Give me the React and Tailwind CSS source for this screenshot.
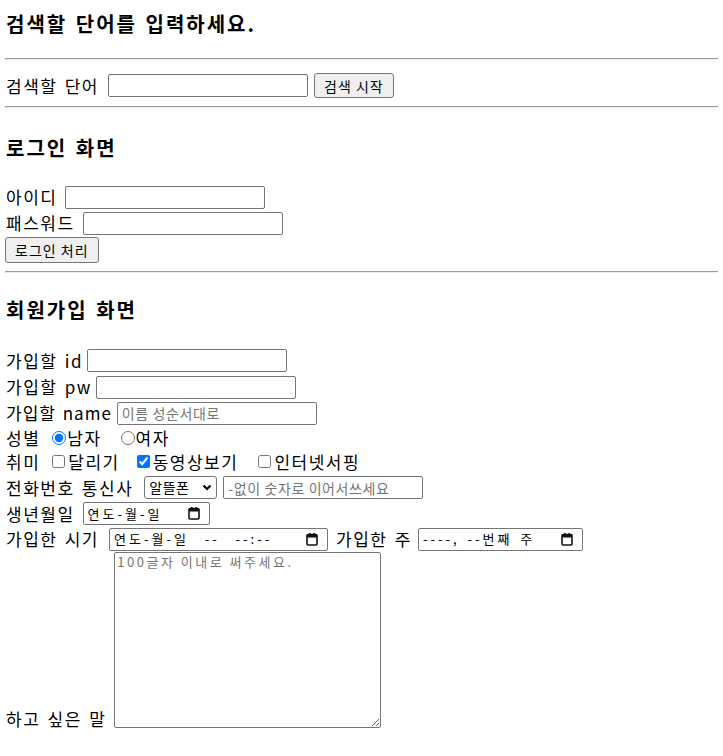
import React from 'react';

const font = { fontFamily: '"Noto Sans CJK KR", "Noto Sans", sans-serif' };

function Hr({ className = '' }) {
    return <div className={`border-t border-b border-t-[#9a9a9a] border-b-[#eeeeee] border-l border-l-[#9a9a9a] ${className}`} />;
}

function TextBox({ width = 'w-[200px]', placeholder }) {
    return (
        <input
            type="text"
            placeholder={placeholder}
            className={`${width} h-[23px] border border-[#767676] rounded-[2px] px-[4px] text-[14px] tracking-[0.6px] leading-none placeholder:text-[#757575] bg-white outline-none`}
        />
    );
}

function Btn({ children, className = '' }) {
    return (
        <button className={`h-[25px] px-[9px] border border-[#767676] rounded-[3px] bg-[#efefef] text-[14px] tracking-[1px] leading-none text-black ${className}`}>
            {children}
        </button>
    );
}

function CalIcon() {
    return (
        <svg width="12" height="13" viewBox="0 0 12 13" className="shrink-0">
            <rect x="1" y="1.5" width="10" height="10.5" rx="1" fill="none" stroke="#111" strokeWidth="1.6" />
            <rect x="1" y="1.5" width="10" height="3" fill="#111" />
            <rect x="3" y="0" width="1.6" height="2.5" fill="#111" />
            <rect x="7.4" y="0" width="1.6" height="2.5" fill="#111" />
        </svg>
    );
}

function DateBox({ width, text }) {
    return (
        <div className={`${width} h-[23px] border border-[#767676] rounded-[2px] flex items-center justify-between pl-[4px] pr-[9px] bg-white`}>
            <span className="text-[13px] text-black whitespace-pre tracking-[3px]">{text}</span>
            <CalIcon />
        </div>
    );
}

export default function App() {
    return (
        <div className="px-[5px] text-black text-[17px] tracking-[1.5px] [word-spacing:2px] bg-white min-h-[756px]" style={font}>
            <div className="h-[48px] flex items-center pl-[1px] text-[20px] tracking-[2px] font-bold">검색할 단어를 입력하세요.</div>
            <Hr className="mt-[10px]" />
            <div className="mt-[13px] h-[25px] flex items-center gap-[9px] pl-[1px]">
                <span>검색할 단어</span>
                <TextBox />
                <Btn className="-ml-[3px]">검색 시작</Btn>
            </div>
            <Hr className="mt-[8px]" />

            <div className="mt-[16px] h-[48px] flex items-center pl-[1px] text-[20px] tracking-[2px] font-bold">로그인 화면</div>
            <div className="mt-[12px] h-[26px] flex items-center gap-[8px] pl-[1px]">
                <span>아이디</span>
                <TextBox />
            </div>
            <div className="h-[26px] flex items-center gap-[8px] pl-[1px]">
                <span>패스워드</span>
                <TextBox />
            </div>
            <Btn className="h-[26px] mt-[-2px]">로그인 처리</Btn>
            <Hr className="mt-[8px]" />

            <div className="mt-[13px] h-[48px] flex items-center pl-[1px] text-[20px] tracking-[2px] font-bold">회원가입 화면</div>
            <div className="mt-[13px] h-[27px] flex items-center gap-[4px] pl-[1px]">
                <span>가입할 id</span>
                <TextBox />
            </div>
            <div className="h-[26px] flex items-center gap-[4px] pl-[1px]">
                <span>가입할 pw</span>
                <TextBox />
            </div>
            <div className="h-[26px] flex items-center gap-[5px] pl-[1px]">
                <span className="tracking-[1px]">가입할 name</span>
                <TextBox placeholder="이름 성순서대로" />
            </div>
            <div className="h-[23px] flex items-center pl-[1px]">
                <span className="mr-[12px]">성별</span>
                <label className="flex items-center gap-[1px] mr-[19px]">
                    <input type="radio" name="gender" defaultChecked className="w-[14px] h-[14px] m-0 accent-[#0075ff]" />
                    <span>남자</span>
                </label>
                <label className="flex items-center gap-[1px]">
                    <input type="radio" name="gender" className="w-[14px] h-[14px] m-0" />
                    <span>여자</span>
                </label>
            </div>
            <div className="h-[25px] flex items-center pl-[1px]">
                <span className="mr-[12px]">취미</span>
                <label className="flex items-center gap-[3px] mr-[17px]">
                    <input type="checkbox" className="w-[13px] h-[13px] m-0" />
                    <span>달리기</span>
                </label>
                <label className="flex items-center gap-[3px] mr-[20px]">
                    <input type="checkbox" defaultChecked className="w-[13px] h-[13px] m-0 accent-[#0075ff]" />
                    <span>동영상보기</span>
                </label>
                <label className="flex items-center gap-[3px]">
                    <input type="checkbox" className="w-[13px] h-[13px] m-0" />
                    <span>인터넷서핑</span>
                </label>
            </div>
            <div className="h-[27px] flex items-center gap-[6px] pl-[1px]">
                <span className="mr-[5px]">전화번호 통신사</span>
                <div className="w-[73px] h-[23px] border border-[#767676] rounded-[3px] flex items-center justify-between pl-[4px] pr-[4px] bg-white">
                    <span className="text-[14px] tracking-[0.5px]">알뜰폰</span>
                    <svg width="10" height="7" viewBox="0 0 10 7">
                        <path d="M1.5 1.5 L5 5 L8.5 1.5" fill="none" stroke="#000" strokeWidth="2" />
                    </svg>
                </div>
                <TextBox placeholder="-없이 숫자로 이어서쓰세요" />
            </div>
            <div className="h-[25px] flex items-center gap-[8px] pl-[1px]">
                <span>생년월일</span>
                <DateBox width="w-[127px]" text="연도-월-일" />
            </div>
            <div className="h-[26px] flex items-center gap-[6px] pl-[1px]">
                <span className="mr-[4px]">가입한 시기</span>
                <DateBox width="w-[219px]" text="연도-월-일  --  --:--" />
                <span className="ml-[2px]">가입한 주</span>
                <DateBox width="w-[165px]" text="----, --번째 주" />
            </div>
            <div className="flex items-end gap-[8px] pl-[1px]">
                <span className="leading-[20px] mb-[-1px]">하고 싶은 말</span>
                <textarea
                    placeholder="100글자 이내로 써주세요."
                    className="w-[267px] h-[176px] border border-[#767676] rounded-[2px] px-[2px] py-[1px] text-[13px] tracking-[2.5px] leading-[16px] placeholder:text-[#757575] bg-white resize outline-none"
                />
            </div>
        </div>
    );
}
